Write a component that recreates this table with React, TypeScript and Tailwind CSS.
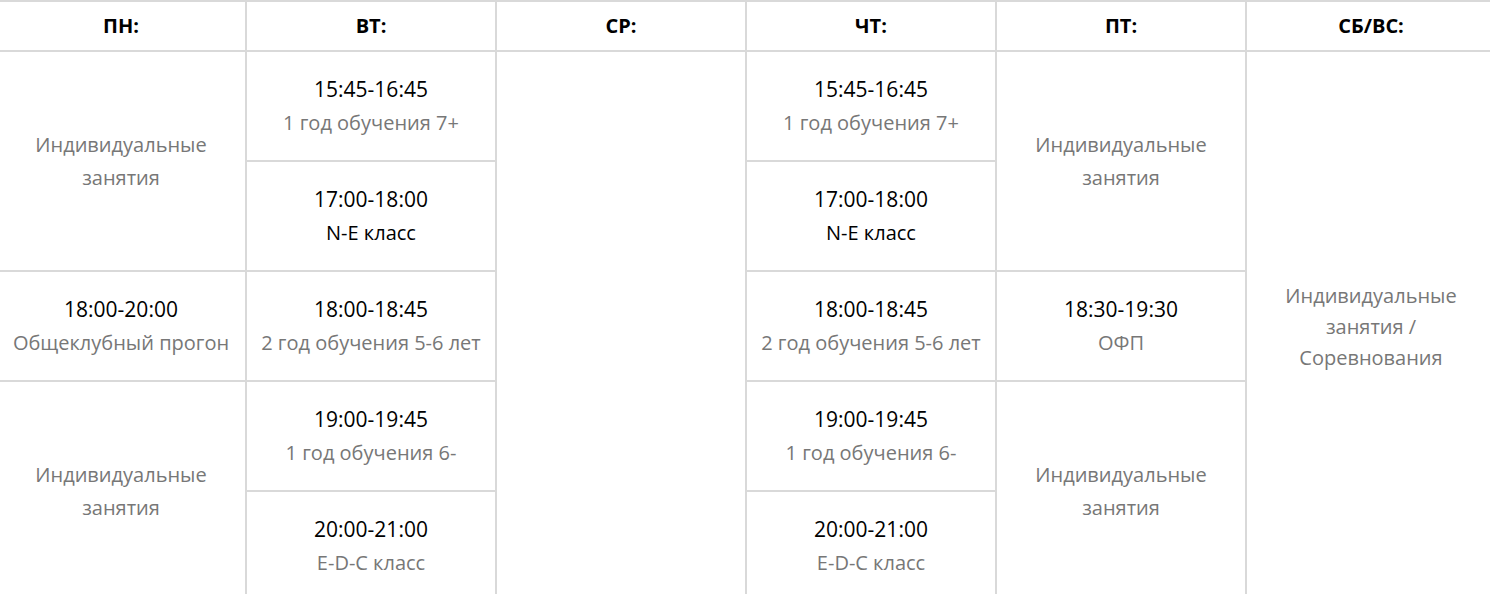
import React from "react";

type Slot = { time?: string; label: string; dark?: boolean };

const font = { fontFamily: "'Open Sans', 'Noto Sans', sans-serif" };

function Cell({ slot, className = "" }: { slot?: Slot; className?: string }) {
  return (
    <div className={`bg-white flex flex-col items-center justify-center text-center text-[20px] leading-[33px] ${className}`}>
      {slot?.time && <span className="text-black text-[21px]">{slot.time}</span>}
      {slot && (
        <span className={slot.dark ? "text-black" : "text-[#777777]"}>
          {slot.label}
        </span>
      )}
    </div>
  );
}

function Individual({ className }: { className: string }) {
  return (
    <div className={`bg-white row-span-2 flex flex-col items-center justify-center text-[20px] leading-[33px] text-[#777777] ${className}`}>
      <span>Индивидуальные</span>
      <span>занятия</span>
    </div>
  );
}

const days = ["ПН:", "ВТ:", "СР:", "ЧТ:", "ПТ:", "СБ/ВС:"];

const weekday: Slot[] = [
  { time: "15:45-16:45", label: "1 год обучения 7+" },
  { time: "17:00-18:00", label: "N-E класс", dark: true },
  { time: "18:00-18:45", label: "2 год обучения 5-6 лет" },
  { time: "19:00-19:45", label: "1 год обучения 6-" },
  { time: "20:00-21:00", label: "E-D-C класс" },
];

const rowStarts = ["row-start-2", "row-start-3", "row-start-4", "row-start-5", "row-start-6"];

export default function App() {
  return (
    <div className="h-screen w-full overflow-hidden bg-white" style={font}>
      <div className="-ml-[3px] w-[1498px] grid grid-cols-[repeat(6,248px)] grid-rows-[48px_repeat(5,108px)] gap-[2px] pt-[2px] bg-[#d9d9d9]">
        {days.map((d) => (
          <div key={d} className="bg-white flex items-center justify-center text-[20px] font-bold text-black">
            {d}
          </div>
        ))}

        {/* ПН */}
        <Individual className="col-start-1 row-start-2" />
        <Cell className="col-start-1 row-start-4" slot={{ time: "18:00-20:00", label: "Общеклубный прогон" }} />
        <Individual className="col-start-1 row-start-5" />

        {/* ВТ */}
        {weekday.map((s, i) => (
          <Cell key={"vt" + i} className={`col-start-2 ${rowStarts[i]}`} slot={s} />
        ))}

        {/* СР */}
        <div className="bg-white col-start-3 row-start-2 row-span-5" />

        {/* ЧТ */}
        {weekday.map((s, i) => (
          <Cell key={"ch" + i} className={`col-start-4 ${rowStarts[i]}`} slot={s} />
        ))}

        {/* ПТ */}
        <Individual className="col-start-5 row-start-2" />
        <Cell className="col-start-5 row-start-4" slot={{ time: "18:30-19:30", label: "ОФП" }} />
        <Individual className="col-start-5 row-start-5" />

        {/* СБ/ВС */}
        <div className="bg-white col-start-6 row-start-2 row-span-5 flex flex-col items-center justify-center text-[20px] leading-[31px] text-[#777777]">
          <span>Индивидуальные</span>
          <span>занятия /</span>
          <span>Соревнования</span>
        </div>
      </div>
    </div>
  );
}
